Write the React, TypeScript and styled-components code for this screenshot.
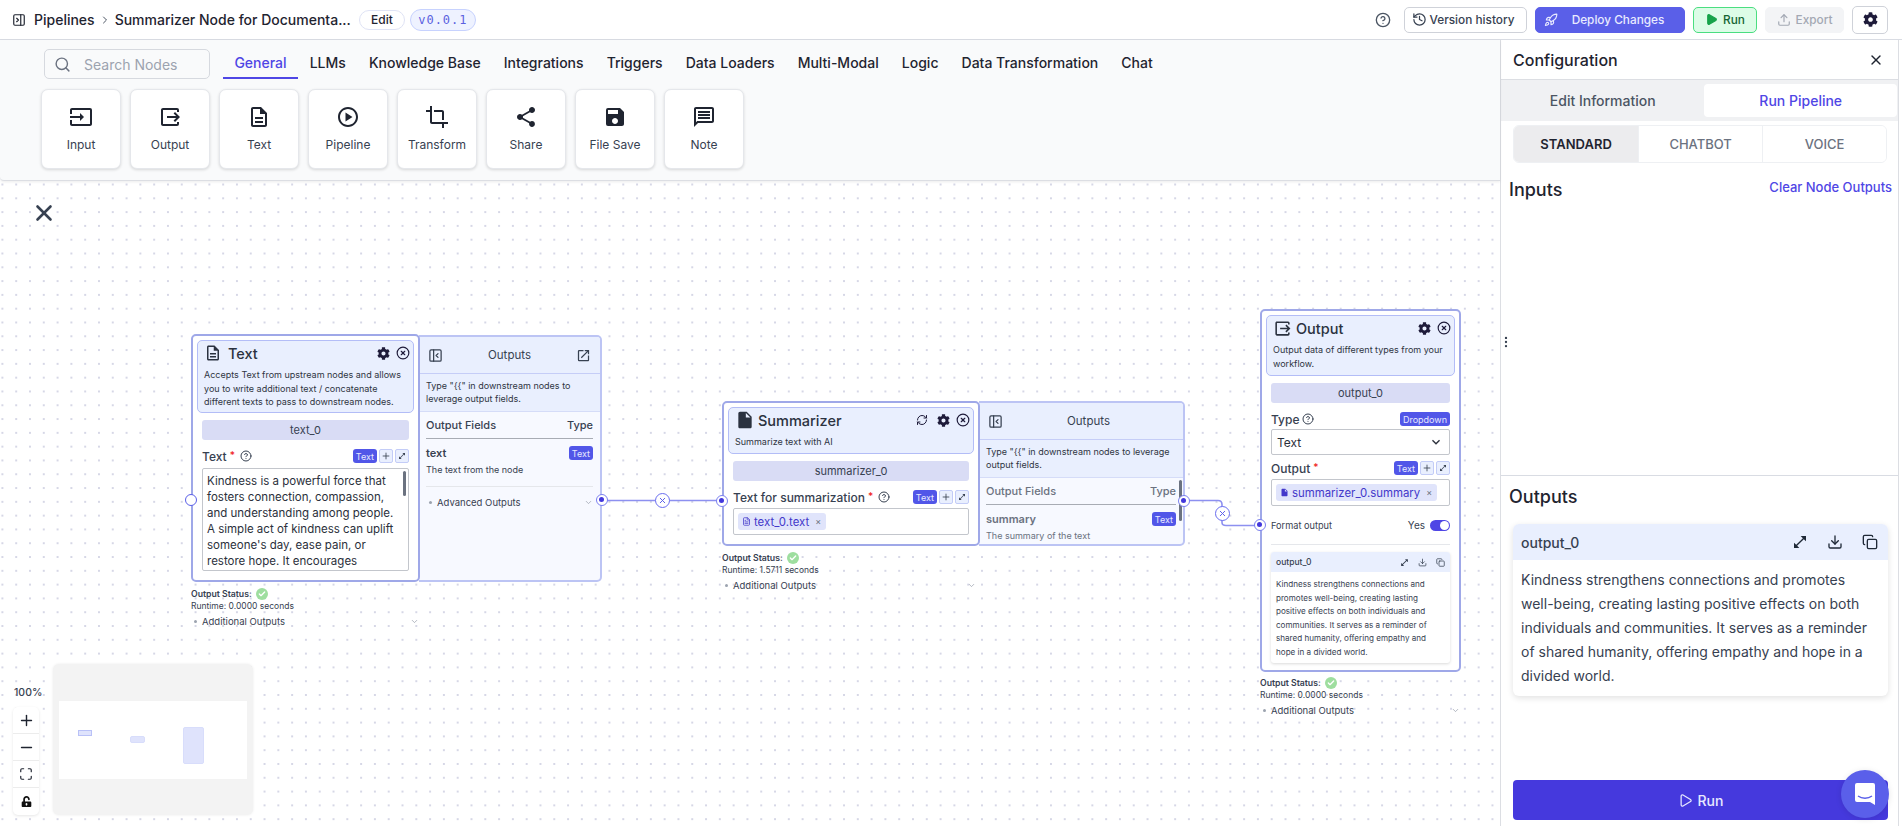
import React from "react";
import styled, { createGlobalStyle } from "styled-components";
import {
  MdOutlineInput, MdOutlineOutput, MdOutlineDescription, MdOutlinePlayCircle, MdCrop, MdShare, MdSave, MdOutlineMessage,
  MdInsertDriveFile, MdOutlineOpenInNew, MdKeyboardArrowDown, MdOpenInFull,
} from "react-icons/md";
import { FaCog, FaUnlockAlt } from "react-icons/fa";
import {
  Search, CircleHelp, History, Rocket, Play, Upload, X, CircleX, RefreshCw, PanelLeftClose, Plus, Minus,
  Maximize, Download, Copy, ChevronDown, ChevronRight, Check, PanelRightClose, EllipsisVertical, FileText,
} from "lucide-react";

const Global = createGlobalStyle`
  html, body { margin: 0; padding: 0; height: 100%; overflow: hidden; }
  body { font-family: Inter, "Liberation Sans", sans-serif; color: #1f2430; background: #fff; }
  * { box-sizing: border-box; }
`;

const Page = styled.div`display: flex; flex-direction: column; width: 1902px; height: 826px; overflow: hidden;`;

const TopBar = styled.header`
  height: 40px; flex: none; display: flex; align-items: center; padding: 0 14px 0 12px;
  border-bottom: 1px solid #d9dce3; background: #fff;
`;
const Crumbs = styled.div`display: flex; align-items: center; font-size: 14px; font-weight: 500; color: #1f2430;`;
const CrumbSep = styled.span`display: inline-flex; margin: 0 4px; color: #4b5563;`;
const CrumbIcon = styled.span`display: inline-flex; margin-right: 8px; color: #1f2430;`;
const EditPill = styled.span`
  margin-left: 8px; height: 20px; width: 46px; border-radius: 10px; border: 1px solid #dfe3f5; display: flex;
  align-items: center; justify-content: center; font-size: 12px; font-weight: 500;
`;
const VersionPill = styled.span`
  margin-left: 5px; height: 22px; width: 66px; border-radius: 11px; border: 1px solid #c7d2fe; background: #eef2ff; display: flex;
  align-items: center; justify-content: center; font-size: 12px; letter-spacing: 1px; font-family: "DejaVu Sans Mono", "Liberation Mono", monospace; color: #5a5fe0;
`;
const Spacer = styled.div`flex: 1;`;
const HelpMark = styled.span`display: inline-flex; color: #4b5563; margin-right: 13px;`;
const TopButton = styled.button<{ $kind: "plain" | "deploy" | "run" | "off" | "gear"; $w: number }>`
  width: ${(p) => p.$w}px; height: ${(p) => (p.$kind === "gear" ? 28 : 26)}px; margin-left: 8px; border-radius: 5px; font: 500 11.8px Inter, sans-serif;
  display: inline-flex; align-items: center; justify-content: center; gap: ${(p) => (p.$kind === "deploy" ? 14 : p.$kind === "plain" ? 3 : 5)}px;
  padding: 0 ${(p) => (p.$kind === "deploy" ? 12 : p.$kind === "plain" ? 5 : 0)}px 0 0;
  border: 1px solid ${(p) => ({ plain: "#cfd2d9", deploy: "#5a5fe8", run: "#4ade80", off: "#f3f4f6", gear: "#cfd2d9" }[p.$kind])};
  background: ${(p) => ({ plain: "#fff", deploy: "#5a5fe8", run: "#dcfce7", off: "#f3f4f6", gear: "#fff" }[p.$kind])};
  color: ${(p) => ({ plain: "#374151", deploy: "#e8eaff", run: "#166534", off: "#a3a8b3", gear: "#1e1b3a" }[p.$kind])};
  &:first-of-type { margin-left: 0; }
`;

const Body = styled.div`flex: 1; display: flex; min-height: 0;`;
const Main = styled.div`width: 1500px; flex: none; display: flex; flex-direction: column; position: relative;`;

const Toolbar = styled.div`
  height: 141px; flex: none; background: #f9fafb; border-bottom: 1px solid #dcdee3; box-shadow: 0 1px 3px rgba(0,0,0,.08);
  padding: 9px 0 0 41px; position: relative; z-index: 2; border-bottom-left-radius: 4px;
`;
const ToolRow = styled.div`display: flex; align-items: flex-start; height: 40px;`;
const SearchBox = styled.div`
  width: 166px; height: 30px; margin-left: 3px; border: 1px solid #d6d9df; border-radius: 5px; display: flex; align-items: center; padding-left: 9px; gap: 13px;
  font-size: 14px; color: #6b7280;
  span { color: #9ca3af; }
`;
const Tabs = styled.div`display: flex; margin-left: 13px; height: 30px;`;
const Tab = styled.div<{ $on?: boolean }>`
  padding: 0 11.7px 0 11.4px; font-size: 14px; font-weight: 500; line-height: 27px; height: 30px;
  color: ${(p) => (p.$on ? "#4f46e5" : "#1f2430")};
  border-bottom: 2px solid ${(p) => (p.$on ? "#4f46e5" : "transparent")};
`;
const NodeTiles = styled.div`display: flex; gap: 9px;`;
const Tile = styled.div`
  width: 80px; height: 80px; background: #fff; border: 1px solid #e5e7eb; border-radius: 7px; box-shadow: 0 1px 3px rgba(0,0,0,.14);
  display: flex; flex-direction: column; align-items: center; padding-top: 15px; color: #1f2430; font-size: 12px; font-weight: 500;
  svg { flex: none; }
  span { margin-top: 8px; color: #374151; font-weight: 400; }
`;

const Canvas = styled.div`
  flex: 1; position: relative; background-color: #fff; overflow: hidden;
  background-image: radial-gradient(circle, #d6d7e6 0.8px, transparent 1px); background-size: 13.8px 13.8px; background-position: 9.3px -3.4px;
`;
const CloseCross = styled.span`position: absolute; left: 31px; top: 19px; display: inline-flex; color: #374151;`;
const Edges = styled.svg`position: absolute; left: 0; top: 0; width: 1500px; height: 646px; pointer-events: none; z-index: 1;`;

const Node = styled.div<{ $x: number; $y: number; $w: number; $h: number }>`
  position: absolute; left: ${(p) => p.$x}px; top: ${(p) => p.$y}px; width: ${(p) => p.$w}px; height: ${(p) => p.$h}px;
  background: #fff; border: 2px solid #9fa8e8; border-radius: 5px; padding: 4px; display: flex; flex-direction: column; z-index: 2;
`;
const NodeHead = styled.div<{ $h: number }>`
  height: ${(p) => p.$h}px; flex: none; background: #e9effe; border: 1px solid #b3bdf7; border-radius: 5px; padding: 1px 3px 0 6px;
`;
const NodeTitle = styled.div<{ $gap: number }>`display: flex; align-items: center; height: 22px; font-size: 14.5px; font-weight: 500; color: #2b3240; gap: ${(p) => p.$gap}px;`;
const NodeIcons = styled.div<{ $wide?: boolean }>`
  margin-left: auto; display: flex; align-items: center; gap: 6px; color: #1e1b3a;
  ${(p) => p.$wide && "svg:first-child { margin-right: 3px; }"}
`;
const NodeDesc = styled.div`font-size: 9px; line-height: 13.5px; color: #2f3542; margin-top: 4px;`;
const NodeBody = styled.div`padding: 7px 5px 0; display: flex; flex-direction: column;`;
const NamePill = styled.div`
  height: 20px; background: #d9dcf5; border-radius: 3px; display: flex; align-items: center; justify-content: center; font-size: 11px; color: #374151;
`;
const FieldHead = styled.div<{ $mt?: number }>`
  display: flex; align-items: center; margin-top: ${(p) => p.$mt ?? 8}px; height: 16px; font-size: 12px; font-weight: 500; color: #374151; gap: 3px;
  b { color: #ef1a1a; font-weight: 500; font-size: 10px; margin: -3px 2px 0 0; }
  svg { color: #374151; }
`;
const Badges = styled.div`margin-left: auto; display: flex; gap: 2px; align-items: center;`;
const TypeBadge = styled.span`
  background: #5156e8; color: #e7e9ff; font-size: 9px; height: 14px; padding: 0 3px; border-radius: 3px; display: inline-flex; align-items: center; font-weight: 400;
`;
const MiniButton = styled.span`
  width: 14px; height: 14px; background: #e9effe; border: 1px solid #c3ccf7; border-radius: 2px; display: inline-flex; align-items: center; justify-content: center; color: #4b5563;
`;
const TextArea = styled.div`
  margin-top: 4px; height: 103px; border: 1px solid #c3c6cc; border-radius: 2px; padding: 4px 4px; font-size: 11.5px; line-height: 16px; color: #2b303b; position: relative; overflow: hidden;
`;
const AreaThumb = styled.div`position: absolute; right: 2px; top: 2px; width: 3px; height: 25px; background: #6b7280; border-radius: 2px;`;
const VarInput = styled.div`
  margin-top: 3px; height: 27px; border: 1px solid #c3c6cc; border-radius: 2px; padding: 4px 4px; display: flex; align-items: center;
`;
const VarChip = styled.span`
  height: 17px; background: #e0e4fb; border-radius: 3px; display: inline-flex; align-items: center; padding: 0 5px 0 4px; gap: 3px; color: #4338ca; font-size: 11.4px;
  em { font-style: normal; color: #6b7280; font-size: 9px; margin-left: 3px; }
`;
const SelectBox = styled.div`
  margin-top: 2px; height: 26px; border: 1px solid #c3c6cc; border-radius: 2px; padding: 0 5px; display: flex; align-items: center; justify-content: space-between; font-size: 12px; color: #2b303b;
`;
const FormatRow = styled.div`
  margin-top: 12px; height: 14px; display: flex; align-items: center; font-size: 9.2px; color: #374151; font-weight: 400;
  span:nth-child(2) { margin-left: auto; margin-right: 5px; font-size: 10px; }
`;
const Toggle = styled.span`
  width: 20px; height: 11px; border-radius: 6px; background: #4f46e5; position: relative; display: inline-block;
  &::after { content: ""; position: absolute; right: 1px; top: 1px; width: 9px; height: 9px; border-radius: 50%; background: #fff; }
`;
const NodeRule = styled.div`height: 1px; background: #e5e7eb; margin-top: 12px;`;
const MiniCard = styled.div`margin-top: 7px; height: 111px; border-radius: 3px; box-shadow: 0 1px 3px rgba(0,0,0,.15); overflow: hidden;`;
const MiniCardHead = styled.div`
  height: 20px; background: #e9effe; display: flex; align-items: center; padding: 0 5px; font-size: 8.5px; color: #374151; font-weight: 500;
  div { margin-left: auto; display: flex; gap: 9px; color: #374151; }
`;
const MiniCardText = styled.div`padding: 6px 5px; font-size: 8.1px; line-height: 13.6px; color: #374151;`;

const OutPanel = styled.div<{ $x: number; $y: number; $w: number; $h: number }>`
  position: absolute; left: ${(p) => p.$x}px; top: ${(p) => p.$y}px; width: ${(p) => p.$w}px; height: ${(p) => p.$h}px;
  background: #f7f9ff; border-style: solid; border-width: 2px 2px 2px 0; border-color: #bcc4f4; border-radius: 0 5px 5px 0; overflow: hidden; z-index: 1;
`;
const OutHead = styled.div`
  height: 37px; background: #e9effe; border-bottom: 1px solid #c5cdf7; display: flex; align-items: center; justify-content: space-between; padding: 0 9px; font-size: 11.5px; color: #374151; position: relative;
  span { font-weight: 400; }
`;
const OutDesc = styled.div`
  height: 38px; background: #e9effe; border-bottom: 1px solid #d5dcf8; padding: 5px 7px; font-size: 9px; line-height: 13px; color: #2f3542;
`;
const OutBody = styled.div<{ $dim?: boolean }>`padding: 6px 7px 0; position: relative; color: ${(p) => (p.$dim ? "#6b7280" : "#374151")};`;
const OutCols = styled.div`display: flex; justify-content: space-between; height: 21px; border-bottom: 1px solid #a8acb4; font-size: 11px; font-weight: 500; color: inherit;`;
const OutField = styled.div`display: flex; justify-content: space-between; align-items: flex-start; margin-top: 7px; font-size: 11px; font-weight: 600; color: inherit;`;
const OutFieldNote = styled.div`font-size: 9px; color: inherit; margin-top: 4px;`;
const OutRule = styled.div`height: 1px; background: #e5e7eb; margin-top: 11px;`;
const Advanced = styled.div`
  display: flex; align-items: center; font-size: 9.5px; color: #374151; margin-top: 10px; padding-left: 3px; gap: 5px;
  i { width: 3px; height: 3px; border-radius: 50%; background: #9ca3af; display: inline-block; }
  svg { margin-left: auto; color: #9ca3af; }
`;
const OutThumb = styled.div`position: absolute; right: 1px; top: 2px; width: 3px; height: 41px; background: #6b7280; border-radius: 2px;`;

const StatusBlock = styled.div<{ $x: number; $y: number; $w: number }>`
  position: absolute; left: ${(p) => p.$x}px; top: ${(p) => p.$y}px; width: ${(p) => p.$w}px; font-size: 8.7px; color: #374151; z-index: 2;
`;
const StatusLine = styled.div`display: flex; align-items: center; height: 13px; font-weight: 600; gap: 4px; color: #374151;`;
const CheckDot = styled.span`width: 12px; height: 12px; border-radius: 50%; background: #9ede9f; color: #fff; display: inline-flex; align-items: center; justify-content: center;`;
const RuntimeLine = styled.div`height: 13px; line-height: 13px; font-size: 8.5px;`;
const AddOutputs = styled.div`
  display: flex; align-items: center; gap: 5px; height: 15px; margin-top: 1px; padding-left: 3px; font-size: 9.5px; color: #374151;
  i { width: 3px; height: 3px; border-radius: 50%; background: #9ca3af; display: inline-block; }
  svg { margin-left: auto; color: #9ca3af; }
`;
const Handle = styled.span<{ $x: number; $y: number; $hollow?: boolean }>`
  position: absolute; left: ${(p) => p.$x - 6}px; top: ${(p) => p.$y - 6}px; width: 12px; height: 12px; border-radius: 50%; background: #fff;
  border: 1.5px solid ${(p) => (p.$hollow ? "#5a5fe8" : "#7a7ff0")}; z-index: 3;
  ${(p) => !p.$hollow && `&::after { content: ""; position: absolute; left: 2px; top: 2px; width: 5px; height: 5px; border-radius: 50%; background: #4338dc; }`}
`;
const EdgeBadge = styled.span<{ $x: number; $y: number }>`
  position: absolute; left: ${(p) => p.$x - 7.5}px; top: ${(p) => p.$y - 7.5}px; width: 15px; height: 15px; border-radius: 50%; background: #fff; border: 1.2px solid #6a6ef0; color: #5a5fe8;
  display: flex; align-items: center; justify-content: center; z-index: 3;
`;

const ZoomLabel = styled.div`position: absolute; left: 14px; top: 505px; font-size: 10.5px; font-weight: 500; color: #374151;`;
const ZoomControls = styled.div`
  position: absolute; left: 13px; top: 526px; width: 26px; background: #fff; border-radius: 5px; box-shadow: 0 1px 3px rgba(0,0,0,.1); display: flex; flex-direction: column;
`;
const ZoomBtn = styled.div`
  height: 27px; display: flex; align-items: center; justify-content: center; border-bottom: 1px solid #ececec; color: #1f2430;
  &:last-child { border-bottom: none; }
`;
const MiniMap = styled.div`
  position: absolute; left: 53px; top: 483px; width: 200px; height: 151px; background: #f3f3f3; border-radius: 6px; box-shadow: 0 0 3px rgba(0,0,0,.08); display: flex; align-items: center; padding: 0 6px; z-index: 3;
`;
const MiniView = styled.div`width: 188px; height: 78px; background: #fff; position: relative;`;
const MiniNode = styled.div<{ $x: number; $y: number; $w: number; $h: number; $line?: boolean }>`
  position: absolute; left: ${(p) => p.$x}px; top: ${(p) => p.$y}px; width: ${(p) => p.$w}px; height: ${(p) => p.$h}px;
  background: #dfe3fc; border: 1px solid ${(p) => (p.$line ? "#b9c1f7" : "#d8ddfb")}; border-radius: ${(p) => (p.$line ? 0 : 2)}px;
`;

const Panel = styled.aside`
  width: 399px; flex: none; display: flex; flex-direction: column; border-left: 1px solid #dcdee3; border-right: 1px solid #dcdee3; background: #fff; position: relative;
`;
const PanelHead = styled.div`height: 40px; flex: none; display: flex; align-items: center; justify-content: space-between; padding: 1px 14px 0 12px; border-bottom: 1px solid #dcdee3; font-size: 16px; font-weight: 500; color: #1f2430;`;
const PanelTabs = styled.div`height: 41px; flex: none; background: #f0f1f3; display: flex; padding: 4px 1px 4px 0; font-size: 14px; font-weight: 500;`;
const PanelTab = styled.div<{ $on?: boolean }>`
  width: ${(p) => (p.$on ? 193 : 204)}px; display: flex; align-items: center; justify-content: center; border-radius: 4px; color: ${(p) => (p.$on ? "#4f46e5" : "#4b5563")}; background: ${(p) => (p.$on ? "#fff" : "transparent")};
`;
const Modes = styled.div`margin: 4px 11px 0 12px; height: 38px; flex: none; display: flex; border: 1px solid #eef0f3; border-radius: 6px; overflow: hidden; font-size: 13px; font-weight: 500;`;
const Mode = styled.div<{ $on?: boolean }>`
  flex: 1; display: flex; align-items: center; justify-content: center; font-weight: ${(p) => (p.$on ? 600 : 500)};
  background: ${(p) => (p.$on ? "#ececee" : "#fff")}; color: ${(p) => (p.$on ? "#1f2430" : "#6b7280")}; border-left: 1px solid #eef0f3;
  &:first-child { border-left: none; flex: 1.01; }
`;
const InputsArea = styled.div`height: 313px; flex: none; display: flex; justify-content: space-between; padding: 15px 6px 0 8px; border-bottom: 1px solid #d9dce3; position: relative;`;
const Heading = styled.div`font-size: 18px; font-weight: 500; color: #1f2430; line-height: 24px;`;
const ClearLink = styled.div`font-size: 13px; font-weight: 500; color: #4f46e5; margin-top: -1px; line-height: 20px;`;
const DragDots = styled.span`position: absolute; left: -2px; top: 172px; color: #374151; display: inline-flex;`;
const OutputsArea = styled.div`flex: 1; padding: 9px 0 0 8px; position: relative;`;
const OutCard = styled.div`margin: 15px 0 0 4px; width: 375px; height: 172px; border-radius: 6px; box-shadow: 0 2px 6px rgba(0,0,0,.12); overflow: hidden;`;
const OutCardHead = styled.div`
  height: 36px; background: #e9effe; display: flex; align-items: center; padding: 0 10px 0 8px; font-size: 14px; font-weight: 500; color: #374151;
  div { margin-left: auto; display: flex; gap: 19px; color: #1f2937; }
`;
const OutCardText = styled.div`padding: 8px 8px; font-size: 14px; line-height: 24px; color: #374151;`;
const RunBar = styled.button`
  position: absolute; left: 12px; top: 304px; width: 375px; height: 40px; border: none; border-radius: 4px; background: #4539dd; color: #e8e9ff;
  font: 500 14px Inter, sans-serif; display: flex; align-items: center; justify-content: center; gap: 5px;
`;
const ChatBubble = styled.span`
  position: absolute; left: 1841px; top: 770px; width: 48px; height: 48px; border-radius: 50%; background: #5a5fea; display: flex; align-items: center; justify-content: center; z-index: 5; box-shadow: 0 1px 6px rgba(0,0,0,.1);
`;

const tiles: [React.ReactNode, string][] = [
  [<MdOutlineInput size={24} />, "Input"],
  [<MdOutlineOutput size={24} />, "Output"],
  [<MdOutlineDescription size={24} />, "Text"],
  [<MdOutlinePlayCircle size={24} />, "Pipeline"],
  [<MdCrop size={24} />, "Transform"],
  [<MdShare size={24} />, "Share"],
  [<MdSave size={24} />, "File Save"],
  [<MdOutlineMessage size={24} />, "Note"],
];
const tabs = ["General", "LLMs", "Knowledge Base", "Integrations", "Triggers", "Data Loaders", "Multi-Modal", "Logic", "Data Transformation", "Chat"];
const leverage = 'Type "{{" in downstream nodes to leverage output fields.';

const Status = ({ x, y, w, rt }: { x: number; y: number; w: number; rt: string }) => (
  <StatusBlock $x={x} $y={y} $w={w}>
    <StatusLine>Output Status: <CheckDot><Check size={8} strokeWidth={4} /></CheckDot></StatusLine>
    <RuntimeLine>{`Runtime: ${rt} seconds`}</RuntimeLine>
    <AddOutputs><i />Additional Outputs<ChevronDown size={9} /></AddOutputs>
  </StatusBlock>
);

const Badge3 = () => (
  <Badges>
    <TypeBadge>Text</TypeBadge>
    <MiniButton><Plus size={10} /></MiniButton>
    <MiniButton><MdOpenInFull size={8} /></MiniButton>
  </Badges>
);

export default function App() {
  return (
    <Page>
      <Global />
      <TopBar>
        <Crumbs>
          <CrumbIcon><PanelRightClose size={14} /></CrumbIcon>
          Pipelines
          <CrumbSep><ChevronRight size={12} /></CrumbSep>
          Summarizer Node for Documenta...
        </Crumbs>
        <EditPill>Edit</EditPill>
        <VersionPill>v0.0.1</VersionPill>
        <Spacer />
        <HelpMark><CircleHelp size={16} /></HelpMark>
        <TopButton $kind="plain" $w={123}><History size={15} />Version history</TopButton>
        <TopButton $kind="deploy" $w={150}><Rocket size={14} />Deploy Changes</TopButton>
        <TopButton $kind="run" $w={64}><Play size={13} fill="#16a34a" color="#16a34a" />Run</TopButton>
        <TopButton $kind="off" $w={79}><Upload size={14} />Export</TopButton>
        <TopButton $kind="gear" $w={36}><FaCog size={15} /></TopButton>
      </TopBar>
      <Body>
        <Main>
          <Toolbar>
            <ToolRow>
              <SearchBox><Search size={17} /><span>Search Nodes</span></SearchBox>
              <Tabs>{tabs.map((t, i) => <Tab key={t} $on={i === 0}>{t}</Tab>)}</Tabs>
            </ToolRow>
            <NodeTiles>{tiles.map(([ic, t]) => <Tile key={t}>{ic}<span>{t}</span></Tile>)}</NodeTiles>
          </Toolbar>
          <Canvas>
            <CloseCross><X size={26} strokeWidth={2.4} /></CloseCross>
            <Edges viewBox="0 0 1500 645">
              <path d="M602 319 H722" fill="none" stroke="#8d90f0" strokeWidth="1.6" />
              <path d="M1184 319 H1218 Q1222 319 1222 323 V341 Q1222 344 1226 344 H1260" fill="none" stroke="#8d90f0" strokeWidth="1.6" />
            </Edges>
            <Node $x={191} $y={153} $w={229} $h={248}>
              <NodeHead $h={73}>
                <NodeTitle $gap={6}><MdOutlineDescription size={18} />Text<NodeIcons><FaCog size={13} /><CircleX size={14} /></NodeIcons></NodeTitle>
                <NodeDesc>Accepts Text from upstream nodes and allows you to write additional text / concatenate different texts to pass to downstream nodes.</NodeDesc>
              </NodeHead>
              <NodeBody>
                <NamePill>text_0</NamePill>
                <FieldHead>Text <b>*</b><CircleHelp size={12} /><Badge3 /></FieldHead>
                <TextArea>Kindness is a powerful force that fosters connection, compassion, and understanding among people. A simple act of kindness can uplift someone's day, ease pain, or restore hope. It encourages<AreaThumb /></TextArea>
              </NodeBody>
            </Node>
            <OutPanel $x={419} $y={154} $w={183} $h={247}>
              <OutHead><PanelLeftClose size={15} /><span>Outputs</span><MdOutlineOpenInNew size={15} /></OutHead>
              <OutDesc>{leverage}</OutDesc>
              <OutBody>
                <OutCols><span>Output Fields</span><span>Type</span></OutCols>
                <OutField><span>text</span><TypeBadge>Text</TypeBadge></OutField>
                <OutFieldNote>The text from the node</OutFieldNote>
                <OutRule />
                <Advanced><i />Advanced Outputs<ChevronDown size={9} /></Advanced>
              </OutBody>
            </OutPanel>
            <Handle $x={191} $y={319} $hollow />
            <Handle $x={602} $y={319} />
            <Status x={191} y={406} w={228} rt="0.0000" />
            <EdgeBadge $x={662} $y={319}><X size={9} strokeWidth={2.6} /></EdgeBadge>

            <Node $x={722} $y={220} $w={258} $h={145}>
              <NodeHead $h={47}>
                <NodeTitle $gap={3}><MdInsertDriveFile size={20} />Summarizer<NodeIcons $wide><RefreshCw size={12} /><FaCog size={13} /><CircleX size={14} /></NodeIcons></NodeTitle>
                <NodeDesc>Summarize text with AI</NodeDesc>
              </NodeHead>
              <NodeBody>
                <NamePill>summarizer_0</NamePill>
                <FieldHead>Text for summarization <b>*</b><CircleHelp size={12} /><Badge3 /></FieldHead>
                <VarInput><VarChip><FileText size={9} />text_0.text<em>×</em></VarChip></VarInput>
              </NodeBody>
            </Node>
            <OutPanel $x={979} $y={220} $w={206} $h={145}>
              <OutHead><PanelLeftClose size={15} /><span>Outputs</span><i /></OutHead>
              <OutDesc>{leverage}</OutDesc>
              <OutBody $dim>
                <OutCols><span>Output Fields</span><span>Type</span></OutCols>
                <OutField><span>summary</span><TypeBadge>Text</TypeBadge></OutField>
                <OutFieldNote>The summary of the text</OutFieldNote>
                <OutThumb />
              </OutBody>
            </OutPanel>
            <Handle $x={722} $y={320} />
            <Handle $x={1184} $y={320} />
            <Status x={722} y={370} w={254} rt="1.5711" />
            <EdgeBadge $x={1222} $y={332}><X size={9} strokeWidth={2.6} /></EdgeBadge>

            <Node $x={1260} $y={128} $w={201} $h={363}>
              <NodeHead $h={61}>
                <NodeTitle $gap={4}><MdOutlineOutput size={19} />Output<NodeIcons><FaCog size={13} /><CircleX size={14} /></NodeIcons></NodeTitle>
                <NodeDesc>Output data of different types from your workflow.</NodeDesc>
              </NodeHead>
              <NodeBody>
                <NamePill>output_0</NamePill>
                <FieldHead>Type<CircleHelp size={12} /><Badges><TypeBadge>Dropdown</TypeBadge></Badges></FieldHead>
                <SelectBox>Text<MdKeyboardArrowDown size={16} /></SelectBox>
                <FieldHead $mt={5}>Output <b>*</b><Badge3 /></FieldHead>
                <VarInput><VarChip><MdInsertDriveFile size={9} />summarizer_0.summary<em>×</em></VarChip></VarInput>
                <FormatRow><span>Format output</span><span>Yes</span><Toggle /></FormatRow>
                <NodeRule />
                <MiniCard>
                  <MiniCardHead>output_0<div><MdOpenInFull size={9} /><Download size={9} /><Copy size={9} /></div></MiniCardHead>
                  <MiniCardText>Kindness strengthens connections and promotes well-being, creating lasting positive effects on both individuals and communities. It serves as a reminder of shared humanity, offering empathy and hope in a divided world.</MiniCardText>
                </MiniCard>
              </NodeBody>
            </Node>
            <Handle $x={1260} $y={344} />
            <Status x={1260} y={495} w={200} rt="0.0000" />

            <ZoomLabel>100%</ZoomLabel>
            <ZoomControls>
              <ZoomBtn><Plus size={17} /></ZoomBtn>
              <ZoomBtn><Minus size={17} /></ZoomBtn>
              <ZoomBtn><Maximize size={14} /></ZoomBtn>
              <ZoomBtn><FaUnlockAlt size={11} color="#111" /></ZoomBtn>
            </ZoomControls>
            <MiniMap>
              <MiniView>
                <MiniNode $x={19} $y={29} $w={14} $h={6} $line />
                <MiniNode $x={71} $y={35} $w={15} $h={7} />
                <MiniNode $x={124} $y={26} $w={21} $h={37} />
              </MiniView>
            </MiniMap>
          </Canvas>
        </Main>
        <Panel>
          <PanelHead>Configuration<X size={16} /></PanelHead>
          <PanelTabs><PanelTab>Edit Information</PanelTab><PanelTab $on>Run Pipeline</PanelTab></PanelTabs>
          <Modes><Mode $on>STANDARD</Mode><Mode>CHATBOT</Mode><Mode>VOICE</Mode></Modes>
          <InputsArea>
            <Heading>Inputs</Heading>
            <ClearLink>Clear Node Outputs</ClearLink>
            <DragDots><EllipsisVertical size={14} /></DragDots>
          </InputsArea>
          <OutputsArea>
            <Heading>Outputs</Heading>
            <OutCard>
              <OutCardHead>output_0<div><MdOpenInFull size={16} /><Download size={16} /><Copy size={16} /></div></OutCardHead>
              <OutCardText>Kindness strengthens connections and promotes well-being, creating lasting positive effects on both individuals and communities. It serves as a reminder of shared humanity, offering empathy and hope in a divided world.</OutCardText>
            </OutCard>
            <RunBar><Play size={15} />Run</RunBar>
          </OutputsArea>
        </Panel>
      </Body>
      <ChatBubble>
        <svg width="22" height="24" viewBox="0 0 22 24"><path d="M3 1h16a2 2 0 0 1 2 2v20l-5-3H3a2 2 0 0 1-2-2V3a2 2 0 0 1 2-2z" fill="#fff" /><path d="M4 14c4 3 10 3 14 0" stroke="#5a5fea" strokeWidth="1.4" fill="none" /></svg>
      </ChatBubble>
    </Page>
  );
}
